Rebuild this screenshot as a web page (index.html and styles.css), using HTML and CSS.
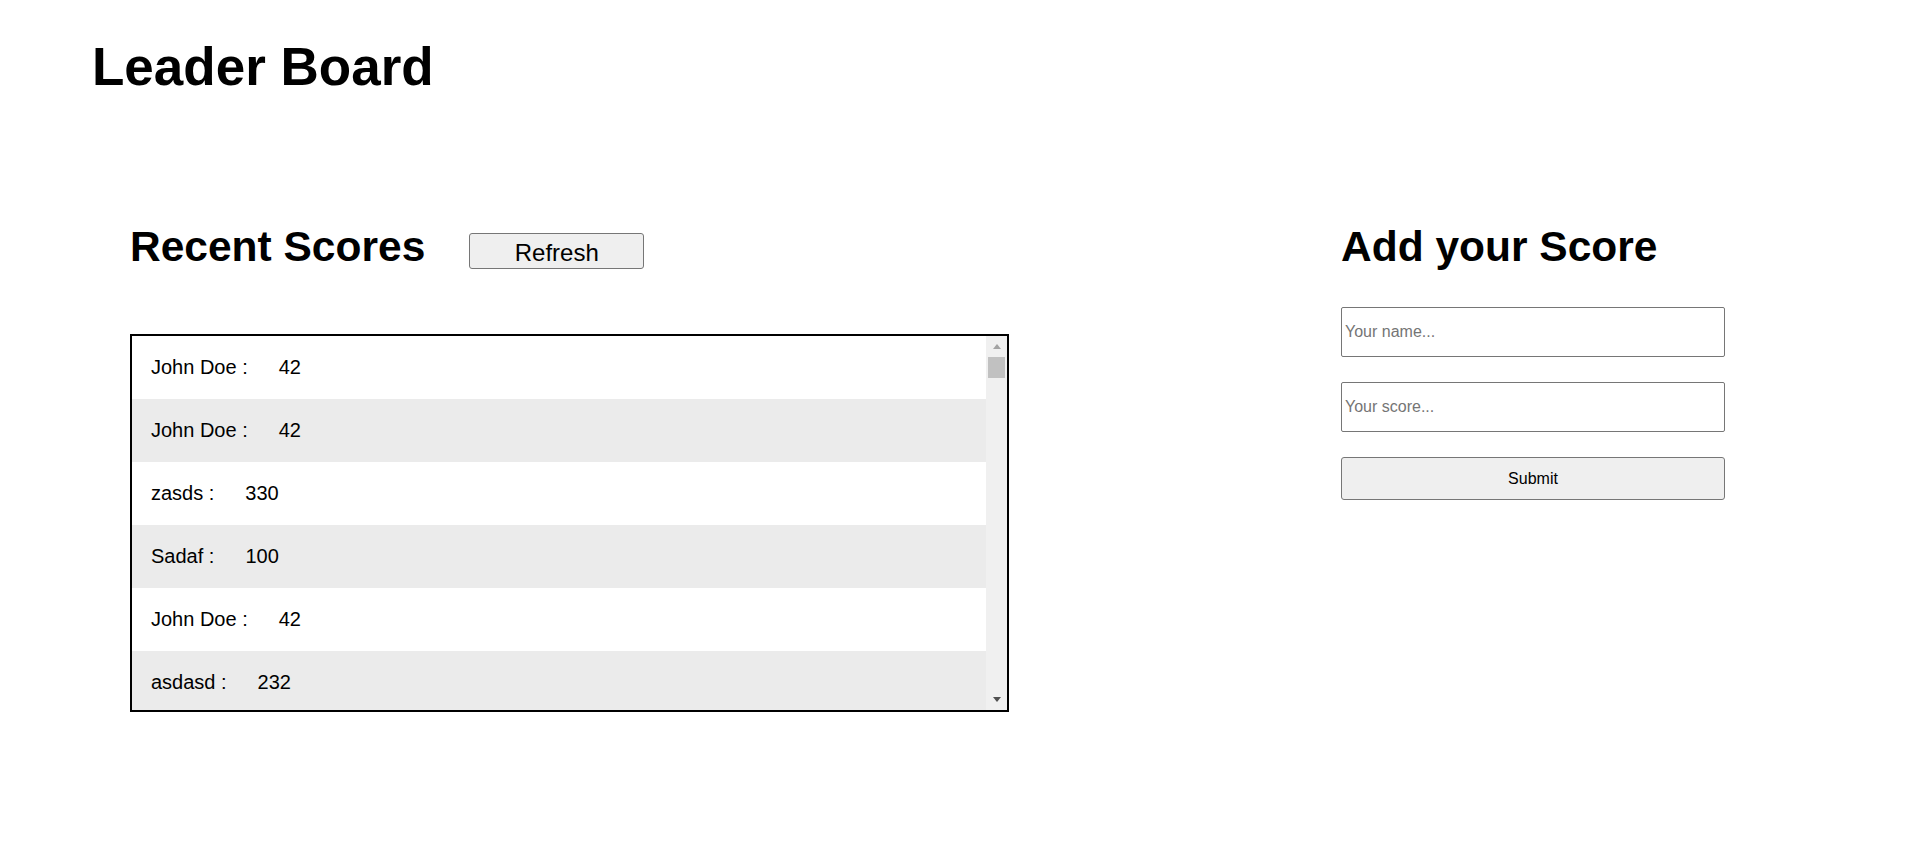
FILE: index.html
```html
<!DOCTYPE html>
<html lang="en">
<head>
    <meta charset="utf-8">
    <title>Leader Board</title>
    <meta name="viewport" content="width=device-width, initial-scale=1">
    <link rel="stylesheet" href="styles.css">
</head>
<body>
    <header class="top">
        <h1>Leader Board</h1>
    </header>

    <main class="board">
        <section class="recent">
            <div class="recent-head">
                <h2>Recent Scores</h2>
                <button type="button" class="refresh" id="refreshBtn">Refresh</button>
            </div>
            <div class="score-box">
                <ul class="score-list" id="scoreList"></ul>
                <div class="scrollbar" aria-hidden="true">
                    <span class="sb-btn"><span class="sb-arrow up"></span></span>
                    <span class="sb-track"><span class="sb-thumb"></span></span>
                    <span class="sb-btn"><span class="sb-arrow down"></span></span>
                </div>
            </div>
        </section>

        <section class="add">
            <h2>Add your Score</h2>
            <form class="score-form" id="scoreForm">
                <input type="text" name="user" placeholder="Your name...">
                <input type="text" name="score" placeholder="Your score...">
                <button type="submit" class="submit">Submit</button>
            </form>
        </section>
    </main>

    <script src="script.js"></script>
</body>
</html>
```

FILE: styles.css
```css
body {
    margin: 0;
    font-family: "Liberation Sans", Arial, Helvetica, sans-serif;
    color: #000000;
    background-color: #ffffff;
}
.top {
    padding: 37px 0 0 92px;
}
.top h1 {
    margin: 0;
    font-size: 53px;
    line-height: 60px;
}
.board {
    display: grid;
    grid-template-columns: 879px 384px;
    column-gap: 332px;
    padding: 126px 0 0 130px;
}
.board h2 {
    margin: 0;
    font-size: 42.5px;
    line-height: 48px;
}
.recent-head {
    display: flex;
    align-items: baseline;
    gap: 44px;
}
.refresh {
    box-sizing: border-box;
    width: 175px;
    height: 36px;
    padding: 5px 0 0;
    font-family: inherit;
    font-size: 24px;
    color: #000000;
    background-color: #efefef;
    border: 1px solid #767676;
    border-radius: 3px;
}
.score-box {
    display: flex;
    box-sizing: border-box;
    height: 378px;
    margin-top: 63px;
    border: 2px solid #000000;
    overflow: hidden;
}
.score-list {
    flex: 1;
    margin: 0;
    padding: 0;
    list-style: none;
    overflow-y: auto;
    scrollbar-width: none;
}
.score-list li {
    display: flex;
    align-items: center;
    height: 63px;
    padding-left: 19px;
    font-size: 20px;
    background-color: #ffffff;
}
.score-list li:nth-child(even) {
    background-color: #ebebeb;
}
.score-list .score {
    margin-left: 31px;
}
.scrollbar {
    display: flex;
    flex-direction: column;
    width: 21px;
    background-color: #f0f0f0;
}
.sb-btn {
    display: flex;
    align-items: center;
    justify-content: center;
    height: 21px;
}
.sb-arrow {
    width: 0;
    height: 0;
    border-left: 4.5px solid transparent;
    border-right: 4.5px solid transparent;
}
.sb-arrow.up {
    border-bottom: 5px solid #a3a3a3;
}
.sb-arrow.down {
    border-top: 5px solid #505050;
}
.sb-track {
    flex: 1;
}
.sb-thumb {
    display: block;
    height: 21px;
    margin: 0 2px;
    background-color: #c1c1c1;
}
.score-form {
    display: flex;
    flex-direction: column;
    gap: 25px;
    margin-top: 36px;
}
.score-form input {
    box-sizing: border-box;
    height: 50px;
    padding: 1px 3px;
    font-family: inherit;
    font-size: 16px;
    border: 1px solid #767676;
    border-radius: 2px;
}
.score-form input::placeholder {
    color: #757575;
}
.submit {
    box-sizing: border-box;
    height: 43px;
    font-family: inherit;
    font-size: 16px;
    color: #000000;
    background-color: #efefef;
    border: 1px solid #767676;
    border-radius: 3px;
}
```

FILE: script.js
```js
(function() {
    const recent = [
        { user: 'John Doe', score: 42 },
        { user: 'John Doe', score: 42 },
        { user: 'zasds', score: 330 },
        { user: 'Sadaf', score: 100 },
        { user: 'John Doe', score: 42 },
        { user: 'asdasd', score: 232 }
    ];

    const list = document.getElementById('scoreList');

    const render = function() {
        list.innerHTML = '';
        recent.forEach(function(entry) {
            const li = document.createElement('li');
            const name = document.createElement('span');
            name.textContent = entry.user + ' :';
            const score = document.createElement('span');
            score.className = 'score';
            score.textContent = entry.score;
            li.appendChild(name);
            li.appendChild(score);
            list.appendChild(li);
        });
    };

    render();
    document.getElementById('refreshBtn').addEventListener('click', render);
    document.getElementById('scoreForm').addEventListener('submit', function(e) {
        e.preventDefault();
    });
})();
```
